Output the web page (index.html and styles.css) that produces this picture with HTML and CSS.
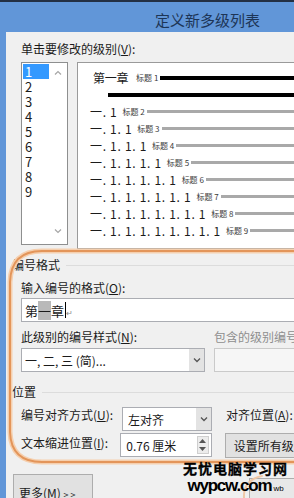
FILE: index.html
```html
<!DOCTYPE html>
<html lang="zh-CN">
  <head>
    <meta charset="UTF-8" />
    <meta name="viewport" content="width=device-width, initial-scale=1.0" />
    <title>定义新多级列表</title>
    <link rel="stylesheet" href="styles.css">
  </head>
  <body>
    <div class="window">
      <!-- [1] Title bar -->
      <header class="titlebar">
        <h1>定义新多级列表</h1>
      </header>

      <!-- [2] Dialog body -->
      <div class="dialog">
        <p class="caption">单击要修改的级别(<u>V</u>):</p>

        <div class="levels">
          <div class="level-list">
            <ul>
              <li class="sel">1</li>
              <li>2</li>
              <li>3</li>
              <li>4</li>
              <li>5</li>
              <li>6</li>
              <li>7</li>
              <li>8</li>
              <li>9</li>
            </ul>
            <div class="scroll">
              <svg width="8" height="5" viewBox="0 0 8 5"><path d="M1 4.5 4 1.5 7 4.5" fill="none" stroke="#a6a6a6" stroke-width="1.2"/></svg>
              <svg width="8" height="5" viewBox="0 0 8 5"><path d="M1 .5 4 3.5 7 .5" fill="none" stroke="#a6a6a6" stroke-width="1.2"/></svg>
            </div>
          </div>

          <div class="preview">
            <div class="row h1"><span class="num">第一章</span><span class="tag">标题 1</span><span class="bar"></span></div>
            <div class="row rule"><span class="bar"></span></div>
            <div class="row"><span class="num">一. 1</span><span class="tag">标题 2</span><span class="bar"></span></div>
            <div class="row"><span class="num">一. 1. 1</span><span class="tag">标题 3</span><span class="bar"></span></div>
            <div class="row"><span class="num">一. 1. 1. 1</span><span class="tag">标题 4</span><span class="bar"></span></div>
            <div class="row"><span class="num">一. 1. 1. 1. 1</span><span class="tag">标题 5</span><span class="bar"></span></div>
            <div class="row"><span class="num">一. 1. 1. 1. 1. 1</span><span class="tag">标题 6</span><span class="bar"></span></div>
            <div class="row"><span class="num">一. 1. 1. 1. 1. 1. 1</span><span class="tag">标题 7</span><span class="bar"></span></div>
            <div class="row"><span class="num">一. 1. 1. 1. 1. 1. 1. 1</span><span class="tag">标题 8</span><span class="bar"></span></div>
            <div class="row"><span class="num">一. 1. 1. 1. 1. 1. 1. 1. 1</span><span class="tag">标题 9</span><span class="bar"></span></div>
          </div>
        </div>

        <!-- [3] Number format -->
        <section class="group format">
          <h2>编号格式</h2>
          <p class="caption">输入编号的格式(<u>O</u>):</p>
          <div class="field format-input">第<mark>一</mark>章<span class="caret"></span><span class="ret">↵</span></div>

          <div class="pair">
            <div>
              <p class="caption">此级别的编号样式(<u>N</u>):</p>
              <div class="field select">
                <span>一, 二, 三 (简)...</span>
                <span class="drop"><svg width="8" height="5" viewBox="0 0 8 5"><path d="M1 .5 4 3.5 7 .5" fill="none" stroke="#555" stroke-width="1.3"/></svg></span>
              </div>
            </div>
            <div>
              <p class="caption muted">包含的级别编号来自(<u>D</u>):</p>
              <div class="field disabled"></div>
            </div>
          </div>
        </section>

        <!-- [4] Position -->
        <section class="group position">
          <h2>位置</h2>
          <div class="pos-row">
            <p class="caption">编号对齐方式(<u>U</u>):</p>
            <div class="field select align">
              <span>左对齐</span>
              <span class="drop"><svg width="8" height="5" viewBox="0 0 8 5"><path d="M1 .5 4 3.5 7 .5" fill="none" stroke="#555" stroke-width="1.3"/></svg></span>
            </div>
            <p class="caption after">对齐位置(<u>A</u>):</p>
          </div>
          <div class="pos-row second">
            <p class="caption">文本缩进位置(<u>I</u>):</p>
            <div class="field spin">
              <span>0.76 厘米</span>
              <span class="spin-btns">
                <svg width="7" height="4" viewBox="0 0 7 4"><path d="M0 4 3.5 0 7 4z" fill="#555"/></svg>
                <svg width="7" height="4" viewBox="0 0 7 4"><path d="M0 0 3.5 4 7 0z" fill="#555"/></svg>
              </span>
            </div>
            <button class="btn set-all">设置所有级别(<u>E</u>)...</button>
          </div>
        </section>

        <div class="footer">
          <button class="btn more">更多(<u>M</u>) <small>&gt; &gt;</small></button>
          <button class="btn ok"></button>
        </div>
      </div>

      <!-- hand-drawn highlight over the screenshot -->
      <svg class="annotation" width="294" height="498" viewBox="0 0 294 498">
        <g fill="none" stroke-linecap="round">
          <path d="M300 251 L42 251 Q11 251 10 282 L10 432 Q11 462 42 462 L300 462" stroke="#f5cfae" stroke-width="5"/>
          <path d="M300 251 L42 251 Q11 251 10 282 L10 432 Q11 462 42 462 L300 462" stroke="#e3955a" stroke-width="2"/>
          <path d="M244 498 Q243 480 262 476" stroke="#f0c8a6" stroke-width="2"/>
        </g>
      </svg>

      <div class="watermark">
        <strong>无忧电脑学习网</strong>
        <span>wypcw.com<small>wb</small></span>
      </div>
    </div>
  </body>
</html>
```

FILE: styles.css
```css
/*
  Global styles
*/

* {
  margin: 0;
  padding: 0;
  box-sizing: border-box;
}
:root {
  --frame: #6196d8;
  --face: #f0f0f0;
  --edge: #abadb3;
  --text: #1b1b1b;
}
body {
  width: 294px;
  height: 498px;
  overflow: hidden;
  background-color: var(--frame);
  color: var(--text);
  font-family: "Noto Sans CJK SC", "Noto Sans", sans-serif;
  font-size: 12px;
}
u {
  text-decoration: underline;
  text-underline-offset: 1px;
}

/*
  Window
*/

.window {
  position: relative;
  width: 340px;
  height: 498px;
}
.titlebar {
  height: 32px;
  padding: 8px 0 0 155px;
  border-top: 2px solid #233044;
}
.titlebar h1 {
  font-size: 15px;
  font-weight: 400;
  line-height: 20px;
  color: #1d3556;
}
.dialog {
  height: 466px;
  margin-left: 6px;
  padding: 9px 0 0 15px;
  background-color: var(--face);
}
.caption {
  line-height: 16px;
  white-space: nowrap;
}
.caption.muted {
  color: #8e8e8e;
}

/* [1] Level list + preview */
.levels {
  display: flex;
  gap: 9px;
  margin-top: 5px;
  align-items: flex-start;
}
.level-list {
  width: 47px;
  height: 183px;
  display: flex;
  padding: 1px;
  background-color: #fff;
  border: 1px solid #8e8f8f;
}
.level-list ul {
  width: 26px;
  list-style: none;
}
.level-list li {
  padding-left: 2px;
  font-size: 13px;
  line-height: 15px;
}
.level-list li.sel {
  color: #fff;
  background-color: #3399ff;
}
.scroll {
  flex: 1;
  display: flex;
  flex-direction: column;
  align-items: center;
  justify-content: space-between;
  padding: 6px 0 9px;
}
.preview {
  flex: 1;
  height: 187px;
  padding: 6px 0 0 12px;
  background-color: #fff;
  border: 1px solid #9a9a9a;
}
.row {
  height: 17px;
  display: flex;
  align-items: center;
}
.row .num {
  font-size: 12px;
  letter-spacing: 0.7px;
  white-space: pre;
}
.row .tag {
  margin-left: 5px;
  font-size: 8px;
  color: #3a3a3a;
  white-space: nowrap;
}
.row .bar {
  flex: 1;
  height: 3px;
  margin-left: 2px;
  background-color: #a9a9a9;
}
.row.h1 {
  padding-left: 3px;
}
.row.h1 .num {
  font-size: 12px;
  letter-spacing: -0.3px;
}
.row.h1 .tag {
  margin-left: 8px;
}
.row.h1 .bar,
.row.rule .bar {
  height: 4px;
  background-color: #000;
}
.row.rule .bar {
  margin-left: 18px;
}

/* [2] Groups */
.group h2 {
  display: flex;
  gap: 6px;
  align-items: center;
  margin-left: -9px;
  font-size: 12px;
  font-weight: 400;
  line-height: 16px;
}
.group h2::after {
  content: "";
  flex: 1;
  height: 1px;
  background-color: #dcdcdc;
}
.format {
  margin-top: 8px;
}
.format > .caption {
  margin-top: 7px;
}
.field {
  height: 24px;
  display: flex;
  align-items: center;
  background-color: #fff;
  border: 1px solid var(--edge);
  white-space: nowrap;
}
.format-input {
  margin-top: 2px;
  padding-left: 3px;
  font-size: 13px;
}
.format-input mark {
  color: inherit;
  background-color: #b9b9b9;
}
.caret {
  width: 1px;
  height: 16px;
  margin-left: 1px;
  background-color: #000;
}
.ret {
  font-size: 8px;
  color: #8a8a8a;
  margin-top: 4px;
}
.pair {
  display: grid;
  gap: 9px;
  margin-top: 7px;
  grid-template-columns: 184px 1fr;
}
.pair .field {
  margin-top: 3px;
}
.select {
  justify-content: space-between;
  padding-left: 3px;
}
.select .drop {
  width: 15px;
  height: 22px;
  display: grid;
  place-items: center;
  background-color: #e3e3e3;
}
.field.disabled {
  background-color: #f6f6f6;
  border-color: #cacaca;
}

.position {
  margin-top: 12px;
}
.pos-row {
  display: flex;
  align-items: flex-start;
  margin-top: 7px;
}
.pos-row.second {
  margin-top: 2px;
}
.pos-row > .caption:first-child {
  width: 101px;
}
.pos-row.second > .caption:first-child {
  padding-top: 2px;
}
.align {
  width: 90px;
  padding-left: 5px;
}
.caption.after {
  margin-left: 14px;
}
.spin {
  width: 93px;
  padding: 0 2px 0 5px;
  justify-content: space-between;
}
.spin-btns {
  width: 12px;
  height: 18px;
  display: flex;
  flex-direction: column;
  align-items: center;
  justify-content: space-around;
  background-color: #ececec;
  border: 1px solid #cfcfcf;
}
.btn {
  font: inherit;
  color: inherit;
  background-color: #e1e1e1;
  border: 1px solid #adadad;
  white-space: nowrap;
}
.set-all {
  height: 25px;
  margin-left: 13px;
  padding: 0 8px;
}

/* [3] Footer */
.footer {
  display: flex;
  align-items: flex-start;
  margin: 16px 0 0 -8px;
}
.more {
  width: 80px;
  height: 36px;
  padding-left: 5px;
  text-align: left;
}
.more small {
  font-size: 9px;
}
.ok {
  width: 60px;
  height: 30px;
  margin: 4px 0 0 156px;
  background-color: #e8e8e8;
}

/* [4] Overlays */
.annotation {
  position: absolute;
  top: 0;
  left: 0;
  pointer-events: none;
}
.watermark {
  position: absolute;
  top: 461px;
  left: 183px;
  display: flex;
  flex-direction: column;
  align-items: center;
  line-height: 1;
  color: #000;
}
.watermark strong {
  font-size: 14px;
  letter-spacing: 1px;
  -webkit-text-stroke: 0.3px #000;
}
.watermark span {
  margin-top: 2px;
  font-family: "Liberation Sans", sans-serif;
  font-size: 17px;
  font-weight: 700;
  letter-spacing: -1.2px;
}
.watermark span small {
  margin-left: 2px;
  font-size: 8px;
  font-weight: 400;
  letter-spacing: 0;
}
```
